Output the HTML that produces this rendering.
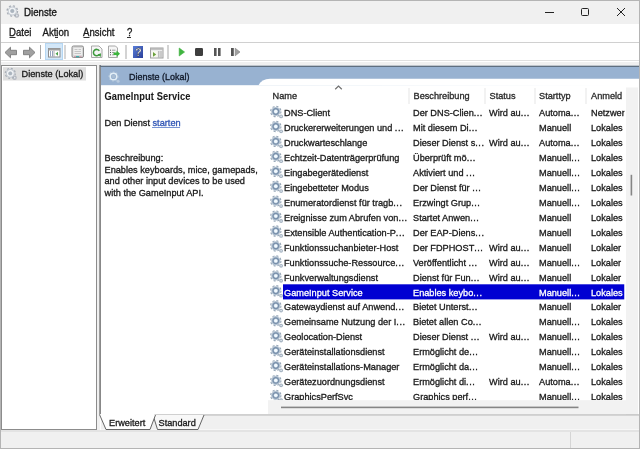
<!DOCTYPE html><html><head><meta charset="utf-8"><style>
html,body{margin:0;padding:0;width:640px;height:449px;overflow:hidden;background:#fff}
svg{display:block;will-change:transform}
text{font-family:"Liberation Sans",sans-serif;font-size:9.2px;fill:#1a1a1a;stroke:#1a1a1a;stroke-width:0.3px}
</style></head><body>
<svg width="640" height="449" viewBox="0 0 640 449">

<rect x="0" y="0" width="640" height="449" fill="#f0f0f0"/>
<rect x="0" y="0" width="640" height="24" fill="#f0f0f0"/>
<g transform="translate(12.3,11) scale(1.05)">
<circle cx="4.3" cy="4.3" r="2.2" fill="#b4b8c0"/><circle cx="4.3" cy="4.3" r="0.9" fill="#e4e8ee"/>
<circle r="4.9" fill="none" stroke="#a8aeb6" stroke-width="1.4" stroke-dasharray="1.9 1.95"/>
<circle r="4.3" fill="#c4cad2"/>
<circle r="2.8" fill="none" stroke="#f2f4f6" stroke-width="1.3"/>
<circle r="1.7" fill="#aab4be"/>
</g>
<text transform="translate(24,16) scale(1,1.08)" style="font-size:9.7px;fill:#111111">Dienste</text>
<rect x="545" y="12" width="9" height="1" fill="#222"/>
<rect x="581.5" y="8.5" width="7" height="7" rx="1" fill="none" stroke="#222" stroke-width="1"/>
<path d="M617 8 L625 16 M625 8 L617 16" stroke="#222" stroke-width="1"/>
<rect x="1" y="24" width="638" height="18" fill="#ffffff"/>
<text transform="translate(9,36) scale(1,1.08)" style="font-size:9.6px;fill:#1a1a1a">Datei</text>
<text transform="translate(42.5,36) scale(1,1.08)" style="font-size:9.6px;fill:#1a1a1a">Aktion</text>
<text transform="translate(83,36) scale(1,1.08)" style="font-size:9.6px;fill:#1a1a1a">Ansicht</text>
<text transform="translate(127,36) scale(1,1.08)" style="font-size:9.6px;fill:#1a1a1a">?</text>
<rect x="9.5" y="37" width="6" height="1" fill="#333"/>
<rect x="55" y="37" width="3" height="1" fill="#333"/>
<rect x="83.5" y="37" width="6" height="1" fill="#333"/>
<rect x="127" y="37" width="4" height="1" fill="#333"/>
<rect x="1" y="42" width="638" height="1" fill="#d0d0d0"/>
<rect x="1" y="43" width="638" height="19" fill="#ffffff"/>
<rect x="1" y="60" width="638" height="1" fill="#e0e0e0"/>
<path d="M5 52.5 L10.5 47.2 L10.5 50.3 L16.5 50.3 L16.5 54.7 L10.5 54.7 L10.5 57.8 Z" fill="#a0a0a0" stroke="#7c7c7c" stroke-width="0.9" stroke-linejoin="round"/>
<path d="M35 52.5 L29.5 47.2 L29.5 50.3 L23.5 50.3 L23.5 54.7 L29.5 54.7 L29.5 57.8 Z" fill="#a0a0a0" stroke="#7c7c7c" stroke-width="0.9" stroke-linejoin="round"/>
<rect x="40" y="45" width="1" height="14" fill="#a8a8a8"/>
<rect x="45.5" y="43.5" width="17" height="16" fill="#d3e7f8" stroke="#b5d6f2" stroke-width="1"/>
<rect x="48.5" y="48.5" width="11.5" height="8.5" fill="#ffffff" stroke="#8c8c8c" stroke-width="1"/>
<rect x="48.5" y="48.5" width="11.5" height="2" fill="#a0a0a0"/>
<path d="M50.5 51 v5.5 M52.5 51 v5.5" stroke="#8a9ab8" stroke-width="0.9"/>
<rect x="53.5" y="50.5" width="1" height="6.5" fill="#b0b0b0"/>
<path d="M55.5 53.8 L58 51.8 L58 55.8 Z" fill="#4aa04a"/>
<rect x="64.5" y="45" width="1" height="14" fill="#b0b0b0"/>
<rect x="72" y="46" width="11.5" height="11.5" rx="1.5" fill="#d8d8d8" stroke="#8a8a8a" stroke-width="1"/>
<rect x="73.5" y="48" width="8.5" height="7" fill="#eeeeee"/>
<path d="M74.5 49.5 h3 M78.5 49.5 h2.5 M74.5 51.5 h6.5 M74.5 53.5 h6.5" stroke="#c0c0c0" stroke-width="0.9"/>
<rect x="74" y="56" width="2" height="1.2" fill="#d0a0b0"/><rect x="76" y="56" width="3.5" height="1.2" fill="#40b0b0"/><rect x="79.5" y="56" width="2" height="1.2" fill="#d0a0b0"/>
<path d="M91.5 46 h7.5 l3 3 v8.5 h-10.5 Z" fill="#f6f6f6" stroke="#a8a8a8" stroke-width="1"/>
<path d="M99.3 50.8 A3.2 3.2 0 1 0 99.2 54.5" fill="none" stroke="#3e9a3e" stroke-width="1.5"/>
<path d="M97.6 54.6 L101 53.2 L100.8 57 Z" fill="#3e9a3e"/>
<path d="M108.5 46 h7 l2 2 v9.5 h-9 Z" fill="#f6f6f6" stroke="#a8a8a8" stroke-width="1"/>
<path d="M110 50.2 h1 M110 52.5 h1 M110 54.8 h1" stroke="#555" stroke-width="1"/>
<path d="M112 50.2 h3.5 M112 52.5 h2.5 M112 54.8 h2.5" stroke="#999" stroke-width="0.9"/>
<path d="M113.5 52.5 h3 v-2 l3.5 3.2 l-3.5 3.2 v-2 h-3 Z" fill="#3cb43c"/>
<rect x="125.5" y="45" width="1" height="14" fill="#a8a8a8"/>
<defs><linearGradient id="hg" x1="0" y1="0" x2="1" y2="1"><stop offset="0" stop-color="#5a7fd8"/><stop offset="1" stop-color="#2a3f9a"/></linearGradient></defs>
<rect x="133" y="46" width="10" height="12" fill="url(#hg)"/>
<text transform="translate(135.2,56) scale(1,1.08)" style="font-size:10.5px;font-weight:bold;fill:#ffffff">?</text>
<rect x="150.5" y="48" width="12.5" height="10" fill="#ececec" stroke="#a0a0a0" stroke-width="1"/>
<rect x="150.5" y="48" width="12.5" height="1.8" fill="#b8b8b8"/>
<rect x="151.5" y="51" width="6" height="6.2" fill="#f8f8f0"/>
<path d="M153 52 L156.2 54.4 L153 56.8 Z" fill="#6aa03a"/>
<path d="M158.8 51 v6.5 M161 51 v6.5" stroke="#a8a8a8" stroke-width="1"/>
<rect x="167.5" y="45" width="1" height="14" fill="#a8a8a8"/>
<path d="M179.2 48 L184.6 52 L179.2 56 Z" fill="#40b440" stroke="#40b440" stroke-width="0.6" stroke-linejoin="round"/>
<rect x="195" y="48" width="8" height="8" rx="1.2" fill="#3e3e3e"/>
<rect x="214" y="48" width="2.6" height="8" fill="#555"/><rect x="218" y="48" width="2.6" height="8" fill="#555"/>
<rect x="231" y="48" width="2.8" height="8" fill="#555"/><path d="M235.2 48.2 L240 52 L235.2 55.8 Z" fill="#a0a0a0" stroke="#808080" stroke-width="0.6"/>
<rect x="0" y="62" width="640" height="387" fill="#f0f0f0"/>
<rect x="1.5" y="65.5" width="95" height="364" fill="#ffffff" stroke="#8c8c8c"/>
<rect x="3" y="67.2" width="83" height="13.3" fill="#dedede"/>
<g transform="translate(10.3,73.4) scale(1.0)">
<circle cx="4.3" cy="4.3" r="2.2" fill="#b4b8c0"/><circle cx="4.3" cy="4.3" r="0.9" fill="#e4e8ee"/>
<circle r="4.9" fill="none" stroke="#a8aeb6" stroke-width="1.4" stroke-dasharray="1.9 1.95"/>
<circle r="4.3" fill="#c4cad2"/>
<circle r="2.8" fill="none" stroke="#f2f4f6" stroke-width="1.3"/>
<circle r="1.7" fill="#aab4be"/>
</g>
<text transform="translate(21.5,76.5) scale(1,1.08)">Dienste (Lokal)</text>
<rect x="100" y="65" width="539" height="365" fill="#ffffff"/>
<rect x="99.3" y="65" width="1.6" height="349.5" fill="#7c7c7c"/>
<rect x="101" y="66" width="538" height="19.2" fill="#98b2d1"/>
<rect x="100" y="65.6" width="539" height="1.4" fill="#5f6f80"/>
<g transform="translate(113.5,76.5)"><circle r="4.6" fill="none" stroke="#b0c4d8" stroke-width="1.2" stroke-dasharray="1.6 1.8"/><circle r="3.3" fill="none" stroke="#e2eef6" stroke-width="1.5"/><circle r="1.8" fill="#a9bdd2"/><circle cx="4.6" cy="4.8" r="1.5" fill="#b8cade"/></g>
<text transform="translate(129,79.6) scale(1,1.08)" style="fill:#101828;stroke:#101828;font-size:9.0px">Dienste (Lokal)</text>
<path d="M258.5 85.2 Q261.5 79 270 78.8 L639 78.8 L639 86 Z" fill="#ffffff"/>
<text transform="translate(104.5,100) scale(1,1.08)" style="font-weight:bold;font-size:9.3px;stroke-width:0.05px;letter-spacing:0.12px">GameInput Service</text>
<text transform="translate(104.5,126.3) scale(1,1.08)">Den Dienst <tspan style="fill:#2f55b5;stroke:#2f55b5">starten</tspan></text>
<rect x="152" y="127" width="28" height="1" fill="#7894d4"/>
<text transform="translate(104.5,161) scale(1,1.08)">Beschreibung:</text>
<text transform="translate(104.5,172.7) scale(1,1.08)">Enables keyboards, mice, gamepads,</text>
<text transform="translate(104.5,184.4) scale(1,1.08)">and other input devices to be used</text>
<text transform="translate(104.5,196) scale(1,1.08)">with the GameInput API.</text>
<text transform="translate(272.5,99) scale(1,1.08)" style="fill:#2a2a2a;stroke:#2a2a2a">Name</text>
<text transform="translate(413.5,99) scale(1,1.08)" style="fill:#2a2a2a;stroke:#2a2a2a">Beschreibung</text>
<text transform="translate(489.5,99) scale(1,1.08)" style="fill:#2a2a2a;stroke:#2a2a2a">Status</text>
<text transform="translate(539,99) scale(1,1.08)" style="fill:#2a2a2a;stroke:#2a2a2a">Starttyp</text>
<text transform="translate(591,99) scale(1,1.08)" style="fill:#2a2a2a;stroke:#2a2a2a">Anmeld</text>
<rect x="408.5" y="88" width="1" height="16" fill="#e6e6e6"/>
<rect x="484.5" y="88" width="1" height="16" fill="#e6e6e6"/>
<rect x="534.5" y="88" width="1" height="16" fill="#e6e6e6"/>
<rect x="585.5" y="88" width="1" height="16" fill="#e6e6e6"/>
<path d="M335.2 89.2 L338.5 86 L341.8 89.2" fill="none" stroke="#707070" stroke-width="1.2"/>
<clipPath id="lc"><rect x="101" y="100" width="523.5" height="300.2"/></clipPath>
<g clip-path="url(#lc)">
<g transform="translate(275.8,111.5) scale(1.0)">
<circle cx="5.3" cy="4.9" r="1.9" fill="#a4b2c0"/><circle cx="5.3" cy="4.9" r="0.8" fill="#e4ecf2"/>
<circle r="5.1" fill="none" stroke="#98a8b8" stroke-width="1.2" stroke-dasharray="2.1 1.9"/>
<circle r="4.6" fill="#b4c3d2"/>
<circle r="2.8" fill="none" stroke="#7890ac" stroke-width="1.3"/>
<circle r="1.7" fill="#f2faff"/>
</g>
<text transform="translate(284,116.2) scale(1,1.08)" style="fill:#1a1a1a;stroke:#1a1a1a">DNS-Client</text>
<text transform="translate(413,116.2) scale(1,1.08)" style="fill:#1a1a1a;stroke:#1a1a1a">Der DNS-Clien<tspan style="letter-spacing:0.5px">...</tspan></text>
<text transform="translate(489,116.2) scale(1,1.08)" style="fill:#1a1a1a;stroke:#1a1a1a">Wird au<tspan style="letter-spacing:0.5px">...</tspan></text>
<text transform="translate(539,116.2) scale(1,1.08)" style="fill:#1a1a1a;stroke:#1a1a1a">Automa<tspan style="letter-spacing:0.5px">...</tspan></text>
<text transform="translate(591,116.2) scale(1,1.08)" style="fill:#1a1a1a;stroke:#1a1a1a">Netzwer</text>
<g transform="translate(275.8,126.44000000000001) scale(1.0)">
<circle cx="5.3" cy="4.9" r="1.9" fill="#a4b2c0"/><circle cx="5.3" cy="4.9" r="0.8" fill="#e4ecf2"/>
<circle r="5.1" fill="none" stroke="#98a8b8" stroke-width="1.2" stroke-dasharray="2.1 1.9"/>
<circle r="4.6" fill="#b4c3d2"/>
<circle r="2.8" fill="none" stroke="#7890ac" stroke-width="1.3"/>
<circle r="1.7" fill="#f2faff"/>
</g>
<text transform="translate(284,131.1) scale(1,1.08)" style="fill:#1a1a1a;stroke:#1a1a1a">Druckererweiterungen und <tspan style="letter-spacing:0.5px">...</tspan></text>
<text transform="translate(413,131.1) scale(1,1.08)" style="fill:#1a1a1a;stroke:#1a1a1a">Mit diesem Di<tspan style="letter-spacing:0.5px">...</tspan></text>
<text transform="translate(539,131.1) scale(1,1.08)" style="fill:#1a1a1a;stroke:#1a1a1a">Manuell</text>
<text transform="translate(591,131.1) scale(1,1.08)" style="fill:#1a1a1a;stroke:#1a1a1a">Lokales</text>
<g transform="translate(275.8,141.38000000000002) scale(1.0)">
<circle cx="5.3" cy="4.9" r="1.9" fill="#a4b2c0"/><circle cx="5.3" cy="4.9" r="0.8" fill="#e4ecf2"/>
<circle r="5.1" fill="none" stroke="#98a8b8" stroke-width="1.2" stroke-dasharray="2.1 1.9"/>
<circle r="4.6" fill="#b4c3d2"/>
<circle r="2.8" fill="none" stroke="#7890ac" stroke-width="1.3"/>
<circle r="1.7" fill="#f2faff"/>
</g>
<text transform="translate(284,146.1) scale(1,1.08)" style="fill:#1a1a1a;stroke:#1a1a1a">Druckwarteschlange</text>
<text transform="translate(413,146.1) scale(1,1.08)" style="fill:#1a1a1a;stroke:#1a1a1a">Dieser Dienst s<tspan style="letter-spacing:0.5px">...</tspan></text>
<text transform="translate(489,146.1) scale(1,1.08)" style="fill:#1a1a1a;stroke:#1a1a1a">Wird au<tspan style="letter-spacing:0.5px">...</tspan></text>
<text transform="translate(539,146.1) scale(1,1.08)" style="fill:#1a1a1a;stroke:#1a1a1a">Automa<tspan style="letter-spacing:0.5px">...</tspan></text>
<text transform="translate(591,146.1) scale(1,1.08)" style="fill:#1a1a1a;stroke:#1a1a1a">Lokales</text>
<g transform="translate(275.8,156.32000000000002) scale(1.0)">
<circle cx="5.3" cy="4.9" r="1.9" fill="#a4b2c0"/><circle cx="5.3" cy="4.9" r="0.8" fill="#e4ecf2"/>
<circle r="5.1" fill="none" stroke="#98a8b8" stroke-width="1.2" stroke-dasharray="2.1 1.9"/>
<circle r="4.6" fill="#b4c3d2"/>
<circle r="2.8" fill="none" stroke="#7890ac" stroke-width="1.3"/>
<circle r="1.7" fill="#f2faff"/>
</g>
<text transform="translate(284,161.0) scale(1,1.08)" style="fill:#1a1a1a;stroke:#1a1a1a">Echtzeit-Datenträgerprüfung</text>
<text transform="translate(413,161.0) scale(1,1.08)" style="fill:#1a1a1a;stroke:#1a1a1a">Überprüft mö<tspan style="letter-spacing:0.5px">...</tspan></text>
<text transform="translate(539,161.0) scale(1,1.08)" style="fill:#1a1a1a;stroke:#1a1a1a">Manuell<tspan style="letter-spacing:0.5px">...</tspan></text>
<text transform="translate(591,161.0) scale(1,1.08)" style="fill:#1a1a1a;stroke:#1a1a1a">Lokales</text>
<g transform="translate(275.8,171.26000000000002) scale(1.0)">
<circle cx="5.3" cy="4.9" r="1.9" fill="#a4b2c0"/><circle cx="5.3" cy="4.9" r="0.8" fill="#e4ecf2"/>
<circle r="5.1" fill="none" stroke="#98a8b8" stroke-width="1.2" stroke-dasharray="2.1 1.9"/>
<circle r="4.6" fill="#b4c3d2"/>
<circle r="2.8" fill="none" stroke="#7890ac" stroke-width="1.3"/>
<circle r="1.7" fill="#f2faff"/>
</g>
<text transform="translate(284,176.0) scale(1,1.08)" style="fill:#1a1a1a;stroke:#1a1a1a">Eingabegerätedienst</text>
<text transform="translate(413,176.0) scale(1,1.08)" style="fill:#1a1a1a;stroke:#1a1a1a">Aktiviert und <tspan style="letter-spacing:0.5px">...</tspan></text>
<text transform="translate(539,176.0) scale(1,1.08)" style="fill:#1a1a1a;stroke:#1a1a1a">Manuell<tspan style="letter-spacing:0.5px">...</tspan></text>
<text transform="translate(591,176.0) scale(1,1.08)" style="fill:#1a1a1a;stroke:#1a1a1a">Lokales</text>
<g transform="translate(275.8,186.20000000000002) scale(1.0)">
<circle cx="5.3" cy="4.9" r="1.9" fill="#a4b2c0"/><circle cx="5.3" cy="4.9" r="0.8" fill="#e4ecf2"/>
<circle r="5.1" fill="none" stroke="#98a8b8" stroke-width="1.2" stroke-dasharray="2.1 1.9"/>
<circle r="4.6" fill="#b4c3d2"/>
<circle r="2.8" fill="none" stroke="#7890ac" stroke-width="1.3"/>
<circle r="1.7" fill="#f2faff"/>
</g>
<text transform="translate(284,190.9) scale(1,1.08)" style="fill:#1a1a1a;stroke:#1a1a1a">Eingebetteter Modus</text>
<text transform="translate(413,190.9) scale(1,1.08)" style="fill:#1a1a1a;stroke:#1a1a1a">Der Dienst für <tspan style="letter-spacing:0.5px">...</tspan></text>
<text transform="translate(539,190.9) scale(1,1.08)" style="fill:#1a1a1a;stroke:#1a1a1a">Manuell<tspan style="letter-spacing:0.5px">...</tspan></text>
<text transform="translate(591,190.9) scale(1,1.08)" style="fill:#1a1a1a;stroke:#1a1a1a">Lokales</text>
<g transform="translate(275.8,201.14000000000001) scale(1.0)">
<circle cx="5.3" cy="4.9" r="1.9" fill="#a4b2c0"/><circle cx="5.3" cy="4.9" r="0.8" fill="#e4ecf2"/>
<circle r="5.1" fill="none" stroke="#98a8b8" stroke-width="1.2" stroke-dasharray="2.1 1.9"/>
<circle r="4.6" fill="#b4c3d2"/>
<circle r="2.8" fill="none" stroke="#7890ac" stroke-width="1.3"/>
<circle r="1.7" fill="#f2faff"/>
</g>
<text transform="translate(284,205.8) scale(1,1.08)" style="fill:#1a1a1a;stroke:#1a1a1a">Enumeratordienst für tragb<tspan style="letter-spacing:0.5px">...</tspan></text>
<text transform="translate(413,205.8) scale(1,1.08)" style="fill:#1a1a1a;stroke:#1a1a1a">Erzwingt Grup<tspan style="letter-spacing:0.5px">...</tspan></text>
<text transform="translate(539,205.8) scale(1,1.08)" style="fill:#1a1a1a;stroke:#1a1a1a">Manuell<tspan style="letter-spacing:0.5px">...</tspan></text>
<text transform="translate(591,205.8) scale(1,1.08)" style="fill:#1a1a1a;stroke:#1a1a1a">Lokales</text>
<g transform="translate(275.8,216.08) scale(1.0)">
<circle cx="5.3" cy="4.9" r="1.9" fill="#a4b2c0"/><circle cx="5.3" cy="4.9" r="0.8" fill="#e4ecf2"/>
<circle r="5.1" fill="none" stroke="#98a8b8" stroke-width="1.2" stroke-dasharray="2.1 1.9"/>
<circle r="4.6" fill="#b4c3d2"/>
<circle r="2.8" fill="none" stroke="#7890ac" stroke-width="1.3"/>
<circle r="1.7" fill="#f2faff"/>
</g>
<text transform="translate(284,220.8) scale(1,1.08)" style="fill:#1a1a1a;stroke:#1a1a1a">Ereignisse zum Abrufen von<tspan style="letter-spacing:0.5px">...</tspan></text>
<text transform="translate(413,220.8) scale(1,1.08)" style="fill:#1a1a1a;stroke:#1a1a1a">Startet Anwen<tspan style="letter-spacing:0.5px">...</tspan></text>
<text transform="translate(539,220.8) scale(1,1.08)" style="fill:#1a1a1a;stroke:#1a1a1a">Manuell</text>
<text transform="translate(591,220.8) scale(1,1.08)" style="fill:#1a1a1a;stroke:#1a1a1a">Lokales</text>
<g transform="translate(275.8,231.02) scale(1.0)">
<circle cx="5.3" cy="4.9" r="1.9" fill="#a4b2c0"/><circle cx="5.3" cy="4.9" r="0.8" fill="#e4ecf2"/>
<circle r="5.1" fill="none" stroke="#98a8b8" stroke-width="1.2" stroke-dasharray="2.1 1.9"/>
<circle r="4.6" fill="#b4c3d2"/>
<circle r="2.8" fill="none" stroke="#7890ac" stroke-width="1.3"/>
<circle r="1.7" fill="#f2faff"/>
</g>
<text transform="translate(284,235.7) scale(1,1.08)" style="fill:#1a1a1a;stroke:#1a1a1a">Extensible Authentication-P<tspan style="letter-spacing:0.5px">...</tspan></text>
<text transform="translate(413,235.7) scale(1,1.08)" style="fill:#1a1a1a;stroke:#1a1a1a">Der EAP-Diens<tspan style="letter-spacing:0.5px">...</tspan></text>
<text transform="translate(539,235.7) scale(1,1.08)" style="fill:#1a1a1a;stroke:#1a1a1a">Manuell</text>
<text transform="translate(591,235.7) scale(1,1.08)" style="fill:#1a1a1a;stroke:#1a1a1a">Lokales</text>
<g transform="translate(275.8,245.96000000000004) scale(1.0)">
<circle cx="5.3" cy="4.9" r="1.9" fill="#a4b2c0"/><circle cx="5.3" cy="4.9" r="0.8" fill="#e4ecf2"/>
<circle r="5.1" fill="none" stroke="#98a8b8" stroke-width="1.2" stroke-dasharray="2.1 1.9"/>
<circle r="4.6" fill="#b4c3d2"/>
<circle r="2.8" fill="none" stroke="#7890ac" stroke-width="1.3"/>
<circle r="1.7" fill="#f2faff"/>
</g>
<text transform="translate(284,250.7) scale(1,1.08)" style="fill:#1a1a1a;stroke:#1a1a1a">Funktionssuchanbieter-Host</text>
<text transform="translate(413,250.7) scale(1,1.08)" style="fill:#1a1a1a;stroke:#1a1a1a">Der FDPHOST<tspan style="letter-spacing:0.5px">...</tspan></text>
<text transform="translate(489,250.7) scale(1,1.08)" style="fill:#1a1a1a;stroke:#1a1a1a">Wird au<tspan style="letter-spacing:0.5px">...</tspan></text>
<text transform="translate(539,250.7) scale(1,1.08)" style="fill:#1a1a1a;stroke:#1a1a1a">Manuell</text>
<text transform="translate(591,250.7) scale(1,1.08)" style="fill:#1a1a1a;stroke:#1a1a1a">Lokaler</text>
<g transform="translate(275.8,260.90000000000003) scale(1.0)">
<circle cx="5.3" cy="4.9" r="1.9" fill="#a4b2c0"/><circle cx="5.3" cy="4.9" r="0.8" fill="#e4ecf2"/>
<circle r="5.1" fill="none" stroke="#98a8b8" stroke-width="1.2" stroke-dasharray="2.1 1.9"/>
<circle r="4.6" fill="#b4c3d2"/>
<circle r="2.8" fill="none" stroke="#7890ac" stroke-width="1.3"/>
<circle r="1.7" fill="#f2faff"/>
</g>
<text transform="translate(284,265.6) scale(1,1.08)" style="fill:#1a1a1a;stroke:#1a1a1a">Funktionssuche-Ressource<tspan style="letter-spacing:0.5px">...</tspan></text>
<text transform="translate(413,265.6) scale(1,1.08)" style="fill:#1a1a1a;stroke:#1a1a1a">Veröffentlicht <tspan style="letter-spacing:0.5px">...</tspan></text>
<text transform="translate(489,265.6) scale(1,1.08)" style="fill:#1a1a1a;stroke:#1a1a1a">Wird au<tspan style="letter-spacing:0.5px">...</tspan></text>
<text transform="translate(539,265.6) scale(1,1.08)" style="fill:#1a1a1a;stroke:#1a1a1a">Manuell<tspan style="letter-spacing:0.5px">...</tspan></text>
<text transform="translate(591,265.6) scale(1,1.08)" style="fill:#1a1a1a;stroke:#1a1a1a">Lokaler</text>
<g transform="translate(275.8,275.84000000000003) scale(1.0)">
<circle cx="5.3" cy="4.9" r="1.9" fill="#a4b2c0"/><circle cx="5.3" cy="4.9" r="0.8" fill="#e4ecf2"/>
<circle r="5.1" fill="none" stroke="#98a8b8" stroke-width="1.2" stroke-dasharray="2.1 1.9"/>
<circle r="4.6" fill="#b4c3d2"/>
<circle r="2.8" fill="none" stroke="#7890ac" stroke-width="1.3"/>
<circle r="1.7" fill="#f2faff"/>
</g>
<text transform="translate(284,280.5) scale(1,1.08)" style="fill:#1a1a1a;stroke:#1a1a1a">Funkverwaltungsdienst</text>
<text transform="translate(413,280.5) scale(1,1.08)" style="fill:#1a1a1a;stroke:#1a1a1a">Dienst für Fun<tspan style="letter-spacing:0.5px">...</tspan></text>
<text transform="translate(489,280.5) scale(1,1.08)" style="fill:#1a1a1a;stroke:#1a1a1a">Wird au<tspan style="letter-spacing:0.5px">...</tspan></text>
<text transform="translate(539,280.5) scale(1,1.08)" style="fill:#1a1a1a;stroke:#1a1a1a">Manuell</text>
<text transform="translate(591,280.5) scale(1,1.08)" style="fill:#1a1a1a;stroke:#1a1a1a">Lokaler</text>
<rect x="283" y="284.3" width="341.5" height="15.1" fill="#0000d2"/>
<g transform="translate(275.8,290.78000000000003) scale(1.0)">
<circle cx="5.3" cy="4.9" r="1.9" fill="#a4b2c0"/><circle cx="5.3" cy="4.9" r="0.8" fill="#e4ecf2"/>
<circle r="5.1" fill="none" stroke="#98a8b8" stroke-width="1.2" stroke-dasharray="2.1 1.9"/>
<circle r="4.6" fill="#b4c3d2"/>
<circle r="2.8" fill="none" stroke="#7890ac" stroke-width="1.3"/>
<circle r="1.7" fill="#f2faff"/>
</g>
<text transform="translate(284,295.5) scale(1,1.08)" style="fill:#ffffff;stroke:#ffffff">GameInput Service</text>
<text transform="translate(413,295.5) scale(1,1.08)" style="fill:#ffffff;stroke:#ffffff">Enables keybo<tspan style="letter-spacing:0.5px">...</tspan></text>
<text transform="translate(539,295.5) scale(1,1.08)" style="fill:#ffffff;stroke:#ffffff">Manuell<tspan style="letter-spacing:0.5px">...</tspan></text>
<text transform="translate(591,295.5) scale(1,1.08)" style="fill:#ffffff;stroke:#ffffff">Lokales</text>
<g transform="translate(275.8,305.72) scale(1.0)">
<circle cx="5.3" cy="4.9" r="1.9" fill="#a4b2c0"/><circle cx="5.3" cy="4.9" r="0.8" fill="#e4ecf2"/>
<circle r="5.1" fill="none" stroke="#98a8b8" stroke-width="1.2" stroke-dasharray="2.1 1.9"/>
<circle r="4.6" fill="#b4c3d2"/>
<circle r="2.8" fill="none" stroke="#7890ac" stroke-width="1.3"/>
<circle r="1.7" fill="#f2faff"/>
</g>
<text transform="translate(284,310.4) scale(1,1.08)" style="fill:#1a1a1a;stroke:#1a1a1a">Gatewaydienst auf Anwend<tspan style="letter-spacing:0.5px">...</tspan></text>
<text transform="translate(413,310.4) scale(1,1.08)" style="fill:#1a1a1a;stroke:#1a1a1a">Bietet Unterst<tspan style="letter-spacing:0.5px">...</tspan></text>
<text transform="translate(539,310.4) scale(1,1.08)" style="fill:#1a1a1a;stroke:#1a1a1a">Manuell</text>
<text transform="translate(591,310.4) scale(1,1.08)" style="fill:#1a1a1a;stroke:#1a1a1a">Lokaler</text>
<g transform="translate(275.8,320.66) scale(1.0)">
<circle cx="5.3" cy="4.9" r="1.9" fill="#a4b2c0"/><circle cx="5.3" cy="4.9" r="0.8" fill="#e4ecf2"/>
<circle r="5.1" fill="none" stroke="#98a8b8" stroke-width="1.2" stroke-dasharray="2.1 1.9"/>
<circle r="4.6" fill="#b4c3d2"/>
<circle r="2.8" fill="none" stroke="#7890ac" stroke-width="1.3"/>
<circle r="1.7" fill="#f2faff"/>
</g>
<text transform="translate(284,325.4) scale(1,1.08)" style="fill:#1a1a1a;stroke:#1a1a1a">Gemeinsame Nutzung der I<tspan style="letter-spacing:0.5px">...</tspan></text>
<text transform="translate(413,325.4) scale(1,1.08)" style="fill:#1a1a1a;stroke:#1a1a1a">Bietet allen Co<tspan style="letter-spacing:0.5px">...</tspan></text>
<text transform="translate(539,325.4) scale(1,1.08)" style="fill:#1a1a1a;stroke:#1a1a1a">Manuell<tspan style="letter-spacing:0.5px">...</tspan></text>
<text transform="translate(591,325.4) scale(1,1.08)" style="fill:#1a1a1a;stroke:#1a1a1a">Lokales</text>
<g transform="translate(275.8,335.6) scale(1.0)">
<circle cx="5.3" cy="4.9" r="1.9" fill="#a4b2c0"/><circle cx="5.3" cy="4.9" r="0.8" fill="#e4ecf2"/>
<circle r="5.1" fill="none" stroke="#98a8b8" stroke-width="1.2" stroke-dasharray="2.1 1.9"/>
<circle r="4.6" fill="#b4c3d2"/>
<circle r="2.8" fill="none" stroke="#7890ac" stroke-width="1.3"/>
<circle r="1.7" fill="#f2faff"/>
</g>
<text transform="translate(284,340.3) scale(1,1.08)" style="fill:#1a1a1a;stroke:#1a1a1a">Geolocation-Dienst</text>
<text transform="translate(413,340.3) scale(1,1.08)" style="fill:#1a1a1a;stroke:#1a1a1a">Dieser Dienst <tspan style="letter-spacing:0.5px">...</tspan></text>
<text transform="translate(489,340.3) scale(1,1.08)" style="fill:#1a1a1a;stroke:#1a1a1a">Wird au<tspan style="letter-spacing:0.5px">...</tspan></text>
<text transform="translate(539,340.3) scale(1,1.08)" style="fill:#1a1a1a;stroke:#1a1a1a">Manuell<tspan style="letter-spacing:0.5px">...</tspan></text>
<text transform="translate(591,340.3) scale(1,1.08)" style="fill:#1a1a1a;stroke:#1a1a1a">Lokales</text>
<g transform="translate(275.8,350.54) scale(1.0)">
<circle cx="5.3" cy="4.9" r="1.9" fill="#a4b2c0"/><circle cx="5.3" cy="4.9" r="0.8" fill="#e4ecf2"/>
<circle r="5.1" fill="none" stroke="#98a8b8" stroke-width="1.2" stroke-dasharray="2.1 1.9"/>
<circle r="4.6" fill="#b4c3d2"/>
<circle r="2.8" fill="none" stroke="#7890ac" stroke-width="1.3"/>
<circle r="1.7" fill="#f2faff"/>
</g>
<text transform="translate(284,355.2) scale(1,1.08)" style="fill:#1a1a1a;stroke:#1a1a1a">Geräteinstallationsdienst</text>
<text transform="translate(413,355.2) scale(1,1.08)" style="fill:#1a1a1a;stroke:#1a1a1a">Ermöglicht de<tspan style="letter-spacing:0.5px">...</tspan></text>
<text transform="translate(539,355.2) scale(1,1.08)" style="fill:#1a1a1a;stroke:#1a1a1a">Manuell<tspan style="letter-spacing:0.5px">...</tspan></text>
<text transform="translate(591,355.2) scale(1,1.08)" style="fill:#1a1a1a;stroke:#1a1a1a">Lokales</text>
<g transform="translate(275.8,365.48) scale(1.0)">
<circle cx="5.3" cy="4.9" r="1.9" fill="#a4b2c0"/><circle cx="5.3" cy="4.9" r="0.8" fill="#e4ecf2"/>
<circle r="5.1" fill="none" stroke="#98a8b8" stroke-width="1.2" stroke-dasharray="2.1 1.9"/>
<circle r="4.6" fill="#b4c3d2"/>
<circle r="2.8" fill="none" stroke="#7890ac" stroke-width="1.3"/>
<circle r="1.7" fill="#f2faff"/>
</g>
<text transform="translate(284,370.2) scale(1,1.08)" style="fill:#1a1a1a;stroke:#1a1a1a">Geräteinstallations-Manager</text>
<text transform="translate(413,370.2) scale(1,1.08)" style="fill:#1a1a1a;stroke:#1a1a1a">Ermöglicht da<tspan style="letter-spacing:0.5px">...</tspan></text>
<text transform="translate(539,370.2) scale(1,1.08)" style="fill:#1a1a1a;stroke:#1a1a1a">Manuell<tspan style="letter-spacing:0.5px">...</tspan></text>
<text transform="translate(591,370.2) scale(1,1.08)" style="fill:#1a1a1a;stroke:#1a1a1a">Lokales</text>
<g transform="translate(275.8,380.42) scale(1.0)">
<circle cx="5.3" cy="4.9" r="1.9" fill="#a4b2c0"/><circle cx="5.3" cy="4.9" r="0.8" fill="#e4ecf2"/>
<circle r="5.1" fill="none" stroke="#98a8b8" stroke-width="1.2" stroke-dasharray="2.1 1.9"/>
<circle r="4.6" fill="#b4c3d2"/>
<circle r="2.8" fill="none" stroke="#7890ac" stroke-width="1.3"/>
<circle r="1.7" fill="#f2faff"/>
</g>
<text transform="translate(284,385.1) scale(1,1.08)" style="fill:#1a1a1a;stroke:#1a1a1a">Gerätezuordnungsdienst</text>
<text transform="translate(413,385.1) scale(1,1.08)" style="fill:#1a1a1a;stroke:#1a1a1a">Ermöglicht di<tspan style="letter-spacing:0.5px">...</tspan></text>
<text transform="translate(489,385.1) scale(1,1.08)" style="fill:#1a1a1a;stroke:#1a1a1a">Wird au<tspan style="letter-spacing:0.5px">...</tspan></text>
<text transform="translate(539,385.1) scale(1,1.08)" style="fill:#1a1a1a;stroke:#1a1a1a">Automa<tspan style="letter-spacing:0.5px">...</tspan></text>
<text transform="translate(591,385.1) scale(1,1.08)" style="fill:#1a1a1a;stroke:#1a1a1a">Lokales</text>
<g transform="translate(275.8,395.36) scale(1.0)">
<circle cx="5.3" cy="4.9" r="1.9" fill="#a4b2c0"/><circle cx="5.3" cy="4.9" r="0.8" fill="#e4ecf2"/>
<circle r="5.1" fill="none" stroke="#98a8b8" stroke-width="1.2" stroke-dasharray="2.1 1.9"/>
<circle r="4.6" fill="#b4c3d2"/>
<circle r="2.8" fill="none" stroke="#7890ac" stroke-width="1.3"/>
<circle r="1.7" fill="#f2faff"/>
</g>
<text transform="translate(284,400.1) scale(1,1.08)" style="fill:#1a1a1a;stroke:#1a1a1a">GraphicsPerfSvc</text>
<text transform="translate(413,400.1) scale(1,1.08)" style="fill:#1a1a1a;stroke:#1a1a1a">Graphics perf<tspan style="letter-spacing:0.5px">...</tspan></text>
<text transform="translate(539,400.1) scale(1,1.08)" style="fill:#1a1a1a;stroke:#1a1a1a">Manuell<tspan style="letter-spacing:0.5px">...</tspan></text>
<text transform="translate(591,400.1) scale(1,1.08)" style="fill:#1a1a1a;stroke:#1a1a1a">Lokales</text>
</g>
<rect x="626" y="87.5" width="12" height="327" fill="#f2f2f2"/>
<rect x="630.6" y="174.8" width="1.6" height="20.7" fill="#858585"/>
<rect x="268" y="400.2" width="370" height="14" fill="#f2f2f2"/>
<rect x="281" y="406.6" width="297.5" height="1.6" fill="#858585"/>
<rect x="100" y="414.6" width="539" height="1" fill="#8a8a8a"/>
<rect x="101" y="415.5" width="538" height="14" fill="#f0f0f0"/>
<path d="M153 415 L157.5 429.5 L198 429.5 L204 415" fill="#f8f8f8" stroke="#555" stroke-width="0.9"/>
<path d="M99.5 414.5 L106 429.5 L150 429.5 L155.5 415" fill="#ffffff" stroke="#555" stroke-width="0.9"/>
<rect x="100.5" y="414" width="54" height="1" fill="#ffffff"/>
<text transform="translate(109,426) scale(1,1.08)">Erweitert</text>
<text transform="translate(158.5,426) scale(1,1.08)">Standard</text>
<rect x="0" y="430" width="640" height="19" fill="#f0f0f0"/>
<rect x="1" y="430.5" width="638" height="1" fill="#d5d5d5"/>
<rect x="570" y="432" width="1" height="16" fill="#d5d5d5"/>
<rect x="0.5" y="0.5" width="639" height="448" fill="none" stroke="#b4b4b4"/>
</svg></body></html>
